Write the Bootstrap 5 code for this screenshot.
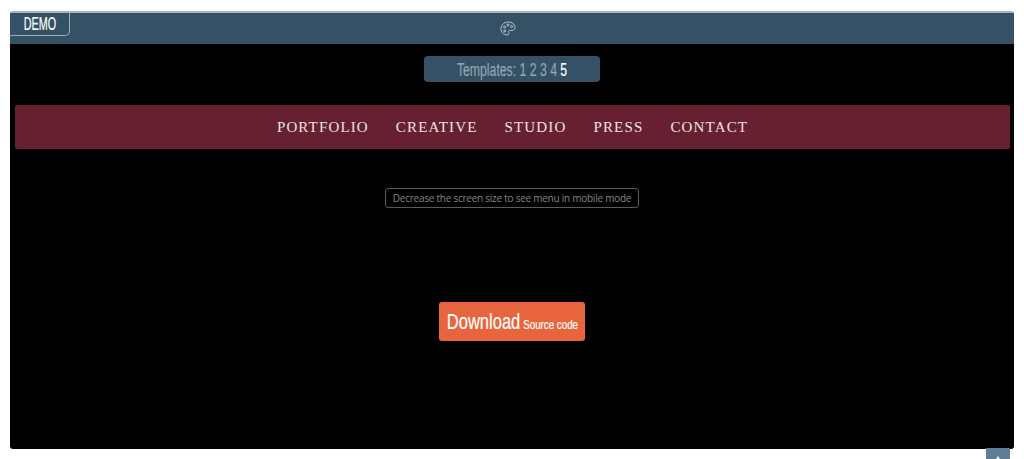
<!DOCTYPE html>
<html lang="en">
  <head>
    <meta charset="UTF-8" />
    <meta name="viewport" content="width=device-width, initial-scale=1.0" />
    <title>Demo</title>
    <link href="https://cdn.jsdelivr.net/npm/bootstrap@5.3.0/dist/css/bootstrap.min.css" rel="stylesheet" />
    <style>
      html, body { height: 459px; overflow: hidden; }
      body { background: #fff; padding: 11px 10px 10px; }
      .demo-frame { height: 438px; background: #000; border-top: 2px solid #a9b4bb; border-radius: 3px; overflow: hidden; }
      .demo-head { height: 31px; padding-right: 8px; background: #345166; }
      .squeeze { display: inline-block; white-space: nowrap; font-family: "Liberation Sans", sans-serif; -webkit-text-stroke: .2px currentColor; }
      .demo-tab {
        top: 0; left: 0; width: 60px; height: 23px;
        border: 1px solid #9fb0bc; border-top: 0; border-left: 0; border-bottom-right-radius: 5px;
        color: #fff; font-size: 18px; line-height: 21px;
      }
      .demo-tab .squeeze { transform: scaleX(.6); }
      .tpl-bar {
        width: 176px; height: 26px; margin-top: 12px; background: #345166; border-radius: 4px;
        color: #95a5b1; font-size: 18px; line-height: 26px;
      }
      .tpl-bar .squeeze { transform: scaleX(.68); }
      .tpl-bar b { color: #fff; font-weight: 400; }
      .main-nav { height: 44px; margin: 23px 4px 0 5px; background: #671f32; border-radius: 2px; gap: 27px; }
      .main-nav a {
        color: #efe3e2; text-decoration: none; letter-spacing: 1.15px;
        font: 400 15px/45px "Liberation Serif", serif;
      }
      .hint-box {
        height: 20px; margin-top: 39px; padding: 0 7px; border: 1px solid #5a5a5a; border-radius: 3px;
        color: #858585; font: 400 10px/18px "Open Sans", sans-serif; letter-spacing: -.25px;
      }
      .dl-btn {
        width: 146px; height: 39px; margin-top: 94px; background: #e8643c; border-radius: 3px;
        color: #fff; text-decoration: none;
      }
      .dl-btn .squeeze { flex: none; transform: scaleX(.75); }
      .dl-btn .big-word { font-size: 22px; }
      .dl-btn .small-word { font-size: 13px; margin-left: 4px; }
      .to-top { right: 14px; top: 448px; width: 24px; height: 24px; background: #5f7d94; }
      .to-top::after {
        content: ""; position: absolute; left: 9px; top: 8px;
        border: 3px solid transparent; border-top: 0; border-bottom: 5px solid #fff;
      }
    </style>
  </head>
  <body>
    <div class="demo-frame position-relative">
      <div class="demo-head d-flex justify-content-center align-items-center">
        <svg width="16" height="15" viewBox="0 0 16 15" fill="none" stroke="#b9c7d1" stroke-width="1">
          <path d="M8.500 1C4.500 1 1 3.600 1 7.500S4 14 7 14c1.800 0 2.300-1.300 1.800-2.400-.6-1.200.1-2.300 1.400-2.200 2.500.3 4.800-.5 4.800-3.100C15 3.200 12 1 8.500 1z" />
          <circle cx="4.600" cy="6" r="1" />
          <circle cx="8" cy="4" r="1" />
          <circle cx="11.600" cy="5.400" r="1" />
          <circle cx="4.800" cy="10" r="1" />
        </svg>
      </div>
      <div class="demo-tab position-absolute text-center"><span class="squeeze">DEMO</span></div>
      <div class="tpl-bar mx-auto text-center"><span class="squeeze">Templates: 1 2 3 4 <b>5</b></span></div>
      <nav class="main-nav d-flex justify-content-center">
        <a href="#">PORTFOLIO</a>
        <a href="#">CREATIVE</a>
        <a href="#">STUDIO</a>
        <a href="#">PRESS</a>
        <a href="#">CONTACT</a>
      </nav>
      <div class="d-flex justify-content-center">
        <div class="hint-box">Decrease the screen size to see menu in mobile mode</div>
      </div>
      <div class="d-flex justify-content-center">
        <a class="dl-btn d-flex justify-content-center align-items-center" href="#">
          <span class="squeeze"><span class="big-word">Download</span><span class="small-word">Source code</span></span>
        </a>
      </div>
    </div>
    <div class="to-top position-fixed"></div>
    <script src="https://cdn.jsdelivr.net/npm/bootstrap@5.3.0/dist/js/bootstrap.bundle.min.js"></script>
  </body>
</html>
